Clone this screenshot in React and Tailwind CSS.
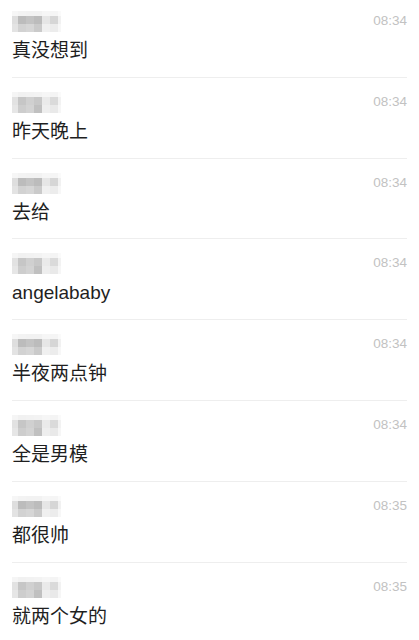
import React from 'react'

const messages = [
  { text: '真没想到', time: '08:34' },
  { text: '昨天晚上', time: '08:34' },
  { text: '去给', time: '08:34' },
  { text: 'angelababy', time: '08:34' },
  { text: '半夜两点钟', time: '08:34' },
  { text: '全是男模', time: '08:34' },
  { text: '都很帅', time: '08:35' },
  { text: '就两个女的', time: '08:35' },
]

// mosaic for the blurred-out nickname
const mosaics = [
  [
    ['bg-[#f6f6f6]', 'bg-[#f3f3f3]', 'bg-[#f2f2f2]', 'bg-[#f2f2f2]', 'bg-[#f6f6f6]', 'bg-[#f5f5f5]', 'bg-[#fafafa]'],
    ['bg-[#dedede]', 'bg-[#bcbcbc]', 'bg-[#c3c3c3]', 'bg-[#bcbcbc]', 'bg-[#e6e6e6]', 'bg-[#d6d6d6]', 'bg-[#f1f1f1]'],
    ['bg-[#e3e3e3]', 'bg-[#d2d2d2]', 'bg-[#d6d6d6]', 'bg-[#cacaca]', 'bg-[#f0f0f0]', 'bg-[#ececec]', 'bg-[#f7f7f7]'],
  ],
  [
    ['bg-[#f5f5f5]', 'bg-[#f1f1f1]', 'bg-[#f2f2f2]', 'bg-[#f3f3f3]', 'bg-[#f6f6f6]', 'bg-[#f4f4f4]', 'bg-[#fafafa]'],
    ['bg-[#e2e2e2]', 'bg-[#c6c6c6]', 'bg-[#d0d0d0]', 'bg-[#c8c8c8]', 'bg-[#eaeaea]', 'bg-[#dadada]', 'bg-[#f2f2f2]'],
    ['bg-[#e6e6e6]', 'bg-[#cdcdcd]', 'bg-[#d3d3d3]', 'bg-[#c0c0c0]', 'bg-[#eeeeee]', 'bg-[#e9e9e9]', 'bg-[#f6f6f6]'],
  ],
]

const colW = ['w-[6px]', 'w-[8px]', 'w-[8px]', 'w-[8px]', 'w-[8px]', 'w-[8px]', 'w-[3px]']
const rowH = ['h-[5px]', 'h-[8px]', 'h-[8px]']

function Mosaic({ variant }) {
  const grid = mosaics[variant % mosaics.length]
  return (
    <div className="flex flex-col">
      {grid.map((row, r) => (
        <div key={r} className="flex">
          {row.map((c, i) => (
            <div key={i} className={`${colW[i]} ${rowH[r]} ${c}`} />
          ))}
        </div>
      ))}
    </div>
  )
}

export default function App() {
  return (
    <div className="w-[419px] h-[640px] overflow-hidden bg-white font-['Liberation_Sans','Noto_Sans_CJK_SC',sans-serif]">
      <div className="-mt-[3px] pl-[12px] pr-[12px]">
        {messages.map((m, i) => (
          <div key={i} className="h-[80.8px] border-b border-[#eeeeee] flex flex-col">
            <div className="flex justify-between items-start pt-[14px]">
              <Mosaic variant={i} />
              <span className="text-[13.5px] leading-none text-[#c2c2c2] mt-[3px]">{m.time}</span>
            </div>
            <div className="mt-[7px] text-[19px] leading-[24px] text-[#1f1f1f]">{m.text}</div>
          </div>
        ))}
      </div>
    </div>
  )
}
